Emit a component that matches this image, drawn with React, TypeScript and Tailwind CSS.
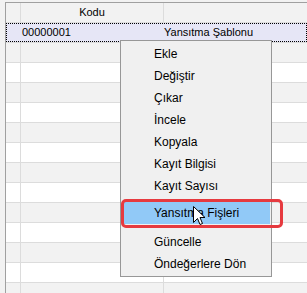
const rowsAfter = 13;

type MenuEntry = { label: string; active?: boolean; gapAfter?: number };

const menu: MenuEntry[] = [
  { label: "Ekle" },
  { label: "Değiştir" },
  { label: "Çıkar" },
  { label: "İncele" },
  { label: "Kopyala" },
  { label: "Kayıt Bilgisi" },
  { label: "Kayıt Sayısı", gapAfter: 5 },
  { label: "Yansıtma Fişleri", active: true, gapAfter: 7 },
  { label: "Güncelle" },
  { label: "Öndeğerlere Dön" },
];

function Cursor() {
  return (
    <svg width="13" height="20" viewBox="0 0 13 20" className="absolute left-[193px] top-[206px]">
      <path
        d="M0.5 0.5 L0.5 16.5 L4.5 12.5 L7 18.5 L9.5 17.5 L7 11.5 L12 11.5 Z"
        fill="#fff"
        stroke="#000"
        strokeWidth="1"
      />
    </svg>
  );
}

export default function App() {
  return (
    <div className="relative w-[307px] h-[293px] overflow-hidden bg-[#f2f2f2] font-['Liberation_Sans',Arial,sans-serif] text-black">
      <div className="ml-[5px] mt-[2px] border-l border-t border-[#a0a0a0] bg-white">
        {/* header */}
        <div className="flex h-[20px] border-b border-[#dcdcdc] bg-[#f2f2f2] text-[11px] leading-[19px]">
          <div className="w-[15px] border-r border-[#dcdcdc]" />
          <div className="w-[143px] border-r border-[#dcdcdc] text-center">Kodu</div>
          <div className="flex-1" />
        </div>

        {/* selected row */}
        <div className="h-[20px] border-b border-[#dcdcdc]">
          <div className="flex h-full border border-dotted border-black bg-[#e6e6f6] text-[11px] leading-[17px]">
            <div className="w-[157px] pl-[15px]">00000001</div>
            <div className="flex-1">Yansıtma Şablonu</div>
          </div>
        </div>

        {Array.from({ length: rowsAfter }).map((_, i) => (
          <div
            key={i}
            className={`flex h-[20px] border-b border-[#dcdcdc] ${i % 2 === 0 ? "bg-[#f2f2f2]" : "bg-white"}`}
          >
            <div className="w-[15px] border-r border-[#dcdcdc]" />
            <div className="w-[143px] border-r border-[#dcdcdc]" />
            <div className="flex-1" />
          </div>
        ))}
      </div>

      {/* context menu */}
      <div className="absolute left-[120px] top-[40px] w-[152px] h-[237px] border border-[#979797] bg-[#f0f0f0] pt-[2px] text-[12px]">
        {menu.map((m) => (
          <div key={m.label}>
            {m.active ? (
              <div className="ml-[3px] mr-[1px] h-[22px] bg-[#91c9f7] pl-[30px] leading-[22px]">{m.label}</div>
            ) : (
              <div className="h-[22px] pl-[33px] leading-[22px]">{m.label}</div>
            )}
            {m.gapAfter === 5 && <div className="h-[5px]" />}
            {m.gapAfter === 7 && <div className="h-[7px]" />}
          </div>
        ))}
      </div>

      {/* annotation frame */}
      <div className="absolute left-[121px] top-[199px] w-[162px] h-[29px] rounded-[5px] border-[3px] border-[#e63a3f]" />

      <Cursor />
    </div>
  );
}
